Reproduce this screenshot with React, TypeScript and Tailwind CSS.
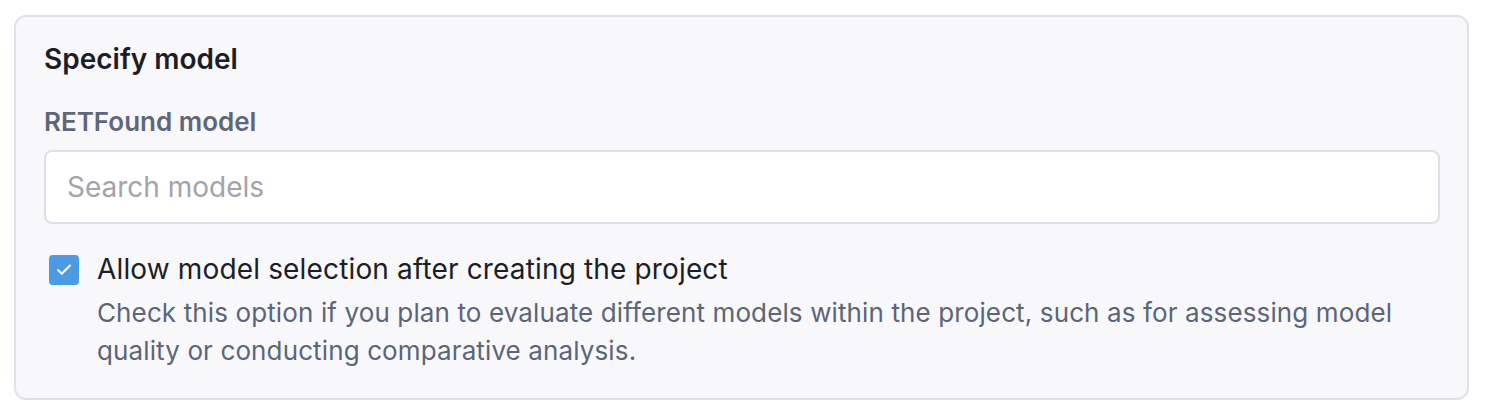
import { Check } from 'lucide-react';

export default function App() {
  return (
    <div className="min-h-[414px] bg-white pl-[14px] pr-[19px] pt-[15px] font-['Inter',sans-serif]">
      <div className="rounded-[12px] border-2 border-[#e0e0ea] bg-[#f8f8fb] pl-[28px] pr-[27px] pt-[24px] pb-[28px]">
        <h2 className="text-[28px] leading-[36px] font-semibold text-[#1d1d26]">Specify model</h2>
        <label className="mt-[28px] block text-[26px] leading-[34px] font-semibold text-[#5e677a]">
          RETFound model
        </label>
        <input
          type="text"
          placeholder="Search models"
          className="mt-[11px] block h-[74px] w-full rounded-[8px] border-2 border-[#dedee8] bg-white px-[21px] text-[28px] text-[#1d1d26] placeholder:text-[#a3a3ab] outline-none"
        />
        <div className="mt-[27px] flex gap-[18px]">
          <div className="mt-[4px] ml-[5px] flex h-[30px] w-[30px] shrink-0 items-center justify-center rounded-[4px] bg-[#4a9be3]">
            <Check className="h-[18px] w-[18px] text-white" strokeWidth={2.75} />
          </div>
          <div>
            <div className="text-[28px] leading-[36px] tracking-[0.15px] text-[#1d1d26]">
              Allow model selection after creating the project
            </div>
            <p className="mt-[7px] text-[26px] leading-[38px] tracking-[0.12px] text-[#5b6579]">
              Check this option if you plan to evaluate different models within the project, such as for assessing model
              quality or conducting comparative analysis.
            </p>
          </div>
        </div>
      </div>
    </div>
  );
}
